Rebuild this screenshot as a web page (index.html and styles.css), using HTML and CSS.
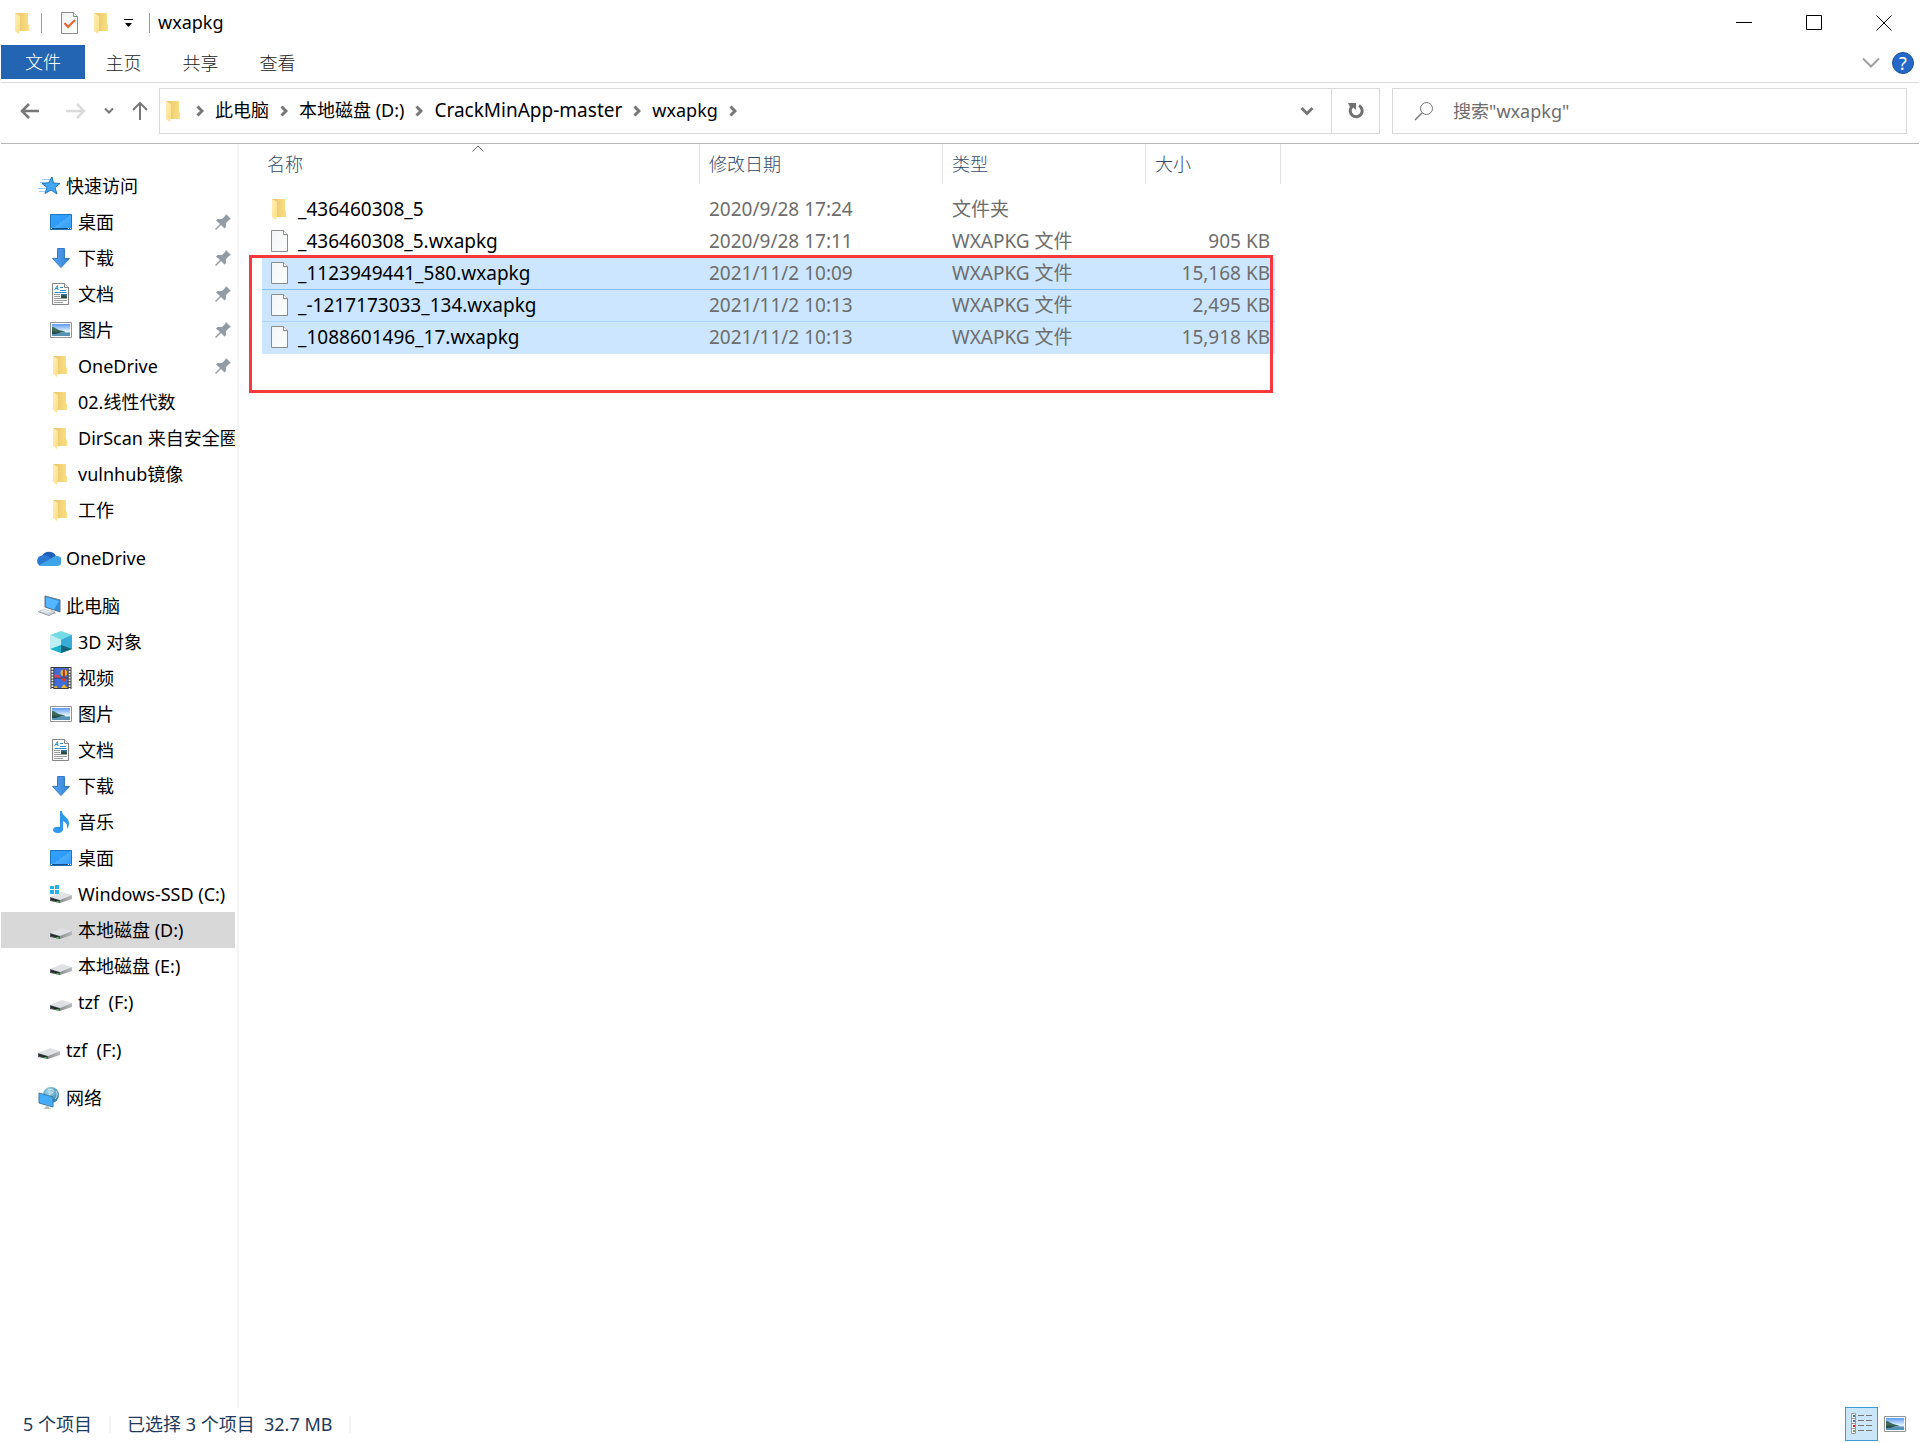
FILE: index.html
```html
<!DOCTYPE html>
<html lang="zh-CN">
<head>
<meta charset="utf-8">
<title>wxapkg</title>
<link rel="stylesheet" href="styles.css">
</head>
<body>
<svg class="sprite" aria-hidden="true">
  <defs>
    <linearGradient id="g-folder" x1="0" x2="1"><stop offset="0" stop-color="#e8c467"/><stop offset="1" stop-color="#fbdf86"/></linearGradient>
    <linearGradient id="g-flap" x1="0" x2="1" y1="0" y2="1"><stop offset="0" stop-color="#ffeeb5"/><stop offset="1" stop-color="#ffdf86"/></linearGradient>
    <linearGradient id="g-desk" x1="0" x2="1" y1="0" y2="1"><stop offset="0" stop-color="#35a3ff"/><stop offset=".5" stop-color="#2e9bfb"/><stop offset=".5" stop-color="#4aacff"/><stop offset="1" stop-color="#2f9dff"/></linearGradient>
    <linearGradient id="g-arrow" x1="0" x2="1"><stop offset="0" stop-color="#5aa5ee"/><stop offset="1" stop-color="#2f7fd8"/></linearGradient>
    <linearGradient id="g-sky" x1="0" x2="0" y1="0" y2="1"><stop offset="0" stop-color="#5d9af0"/><stop offset=".6" stop-color="#e3f3ff"/><stop offset="1" stop-color="#b8dcf0"/></linearGradient>
    <linearGradient id="g-drive" x1="0" x2="1"><stop offset="0" stop-color="#8a8c8e"/><stop offset="1" stop-color="#b9bbbd"/></linearGradient>
    <linearGradient id="g-paper" x1="0" x2="1" y1="0" y2="1"><stop offset="0" stop-color="#f1f4f5"/><stop offset="1" stop-color="#fdfdfd"/></linearGradient>
    <radialGradient id="g-globe" cx=".4" cy=".3" r=".8"><stop offset="0" stop-color="#b8e0f2"/><stop offset=".5" stop-color="#5aa5c9"/><stop offset="1" stop-color="#27698f"/></radialGradient>
  </defs>
  <symbol id="i-folder" viewBox="0 -1 22 22"><path d="M3 0h13v11l1 1v6H6z" fill="url(#g-folder)"/><path d="M3 0l5 3v13l-1 5-4-3z" fill="url(#g-flap)"/></symbol>
  <symbol id="i-file" viewBox="0 0 22 22"><path d="M2.500.5h12l4 4v17h-16z" fill="url(#g-paper)" stroke="#8b8b8b"/><path d="M14.500.5v4h4" fill="#fff" stroke="#8b8b8b"/></symbol>
  <symbol id="i-check" viewBox="0 0 22 22"><use href="#i-file"/><path d="M5.500 11l3.500 4 7-7" fill="none" stroke="#f0602a" stroke-width="2"/></symbol>
  <symbol id="i-desktop" viewBox="0 0 22 22"><path d="M.5 3.500h21v15H.5z" fill="url(#g-desk)" stroke="#1d74bf"/><path d="M1 17h20v1H1z" fill="#174d80"/><path d="M1 17h1v1H1zM18 17h1v1h-1zM20 17h1v1h-1z" fill="#fff"/></symbol>
  <symbol id="i-download" viewBox="0 0 22 22"><path d="M7.500 1.500h7v10h5L11 20.500 2.500 11.500h5z" fill="url(#g-arrow)" stroke="#3779c4"/></symbol>
  <symbol id="i-picture" viewBox="0 0 22 22"><path d="M.5 3.500h21v15H.5z" fill="#fff" stroke="#949494"/><path d="M2 5h18v12H2z" fill="url(#g-sky)"/><path d="M2 8c3 0 4 2 7 3s5 1 7 2.500H2z" fill="#3c6b5d"/><path d="M2 13.500h18V17H2z" fill="#5590b5"/><path d="M2 12.500h11l-7 2.500H2z" fill="#295046"/></symbol>
  <symbol id="i-document" viewBox="0 0 22 22"><path d="M2.500.5h12l4 4v17h-16z" fill="#fff" stroke="#858585"/><path d="M14.500.5v4h4" fill="#f5f5f5" stroke="#858585"/><path d="M4.500 7l3-4.500L8 7M6 5.500h2M10 4.500h3M10 7.500h6M4.500 9.500h12" fill="none" stroke="#2c8fd0"/><path d="M4 11.500h6M4 13.500h6M4 15.500h13M4 17.500h13M4 19.500h9" stroke="#9b9b9b"/><path d="M11 11h6v4h-6z" fill="#3b719f"/><path d="M11 13l3-1 3 2v1h-6z" fill="#2a5140"/></symbol>
  <symbol id="i-star" viewBox="0 0 24 22"><path d="M5 4.500h8M3 7.500h8M1 13.500h8M2 16.500h6" stroke="#9ccdf4"/><path d="M15 2l1.500 6 6.500.5-5 4 2 6.500-6-4-6 3.500 2-6L5 8.500l6.500-.5z" fill="#45a7f2" stroke="#2277bd"/></symbol>
  <symbol id="i-cloud" viewBox="0 0 24 22"><path d="M5 9a8 8 0 0 1 14 0l-7 6-9 1z" fill="#1c5fb4"/><path d="M5 8.500a5.500 5.500 0 0 0-2 10.300L14 12A8 8 0 0 0 5 8.500z" fill="#2b78d4"/><path d="M14 11.500a7 7 0 0 1 5.500-2.500 5 5 0 0 1 1 10H4c-.8 0-1.500-.3-2-.8z" fill="#3ea4ea"/></symbol>
  <symbol id="i-pc" viewBox="0 0 24 22"><path d="M8 1l15 4v12L8 12z" fill="#2d8ddd" stroke="#66747e"/><path d="M9 2l13 4-5 8.500-8-3z" fill="#55b7ff"/><path d="M14 15l4 1 1 3-6-2zM1 16l6-2 11 3-6 3z" fill="#c7cdd3"/><path d="M1 16l11 4 6-3v1l-6 3-11-4z" fill="#8b949c"/><path d="M4 16l8 2M6 15l8 2" stroke="#eef1f4"/></symbol>
  <symbol id="i-cube" viewBox="0 0 22 22"><path d="M11 0l11 4-11 5L0 4z" fill="#74dbe5"/><path d="M0 4l11 5v13L0 18z" fill="#bfeff2"/><path d="M22 4L11 9v13l11-4z" fill="#279fc8"/><path d="M11 9l11-5v14l-11-4z" fill="#38acd7"/><path d="M0 18l11-4 11 4-11 4z" fill="#1bb4cc"/><path d="M11 14l11 4-11 4z" fill="#156578"/></symbol>
  <symbol id="i-video" viewBox="0 0 22 23"><path d="M0 0h22v23H0z" fill="#3b3b3b"/><path d="M2 1v22M20 1v22" stroke="#eee" stroke-width="2" stroke-dasharray="2 1"/><path d="M4 1h14v10H4zM4 12h14v10H4z" fill="#3f6cd8"/><path d="M4 8h4l3 3H4z" fill="#d94757"/><circle cx="14" cy="6" r="3.500" fill="#e6b52a"/><path d="M13 2.500h2V11h-2z" fill="#b32a27"/><path d="M11 12h6l-3 4z" fill="#e23b25"/><path d="M11 22l3-4 4 4zM4 20h3v2H4z" fill="#f0b92c"/></symbol>
  <symbol id="i-music" viewBox="0 0 22 22"><path d="M10 0h2c0 5 7 6 7 12 0 3-1 5-2 6 1-5-2-7-4-8v8c0 3-3 4-5 4-3 0-5-1-5-3 0-3 4-4 7-3z" fill="#2f97ee"/></symbol>
  <symbol id="i-drive" viewBox="0 -1 22 22"><path d="M0 13l12-5 10 3-12 5z" fill="#dfe1e4"/><path d="M10 16l12-5v4l-12 4z" fill="url(#g-drive)"/><path d="M0 13l10 3v3L0 17z" fill="#55585a"/><path d="M1 14l8 2.500v1.500L1 16z" fill="#252829"/><path d="M6.500 17h2v1.500h-2z" fill="#35d04a"/></symbol>
  <symbol id="i-windrive" viewBox="0 0 22 22"><use href="#i-drive"/><path d="M0 3h4v3H0zM5 2h4v4H5zM0 7h4v4H0zM5 7h4v4H5z" fill="#28b1ef"/></symbol>
  <symbol id="i-network" viewBox="0 0 24 22"><circle cx="14" cy="8" r="8" fill="url(#g-globe)"/><path d="M11 3c3-2 6 0 5 2s-4 1-4 3M19 4c2 3 1 6-1 8" fill="none" stroke="#d4ecf4"/><path d="M2 6l14 4v10L2 16z" fill="#45aefa" stroke="#3b7bab"/><path d="M8 18l4 1v2l3 1H6l3-2z" fill="#b8bdc2"/></symbol>
  <symbol id="i-pin" viewBox="0 0 16 16"><path d="M11 0l5 5-2 1-3 3v4l-1.500 1.500L6 11l-5 5-1-1 5-5-4-3.500L2.500 5H7l3-3z" fill="#929ca5"/></symbol>
  <symbol id="i-crumb" viewBox="0 0 8 12"><path d="M1.500 1.500L6 6l-4.500 4.500" fill="none" stroke="#777" stroke-width="3"/></symbol>
  <symbol id="i-down" viewBox="0 0 14 10"><path d="M1.500 2L7 7.500 12.500 2" fill="none" stroke="#767676" stroke-width="3"/></symbol>
</svg>

<div class="window">
  <header class="titlebar">
    <svg class="icon"><use href="#i-folder"/></svg>
    <span class="bar-sep"></span>
    <button class="quick" aria-label="属性"><svg class="icon"><use href="#i-check"/></svg></button>
    <button class="quick" aria-label="新建文件夹"><svg class="icon"><use href="#i-folder"/></svg></button>
    <button class="quick quick-menu" aria-label="自定义快速访问工具栏"><svg width="10" height="10" viewBox="0 0 10 10"><path d="M0 1.500h9" stroke="#000"/><path d="M1 5h7L4.500 9z"/></svg></button>
    <span class="bar-sep"></span>
    <h1 class="title">wxapkg</h1>
    <div class="controls">
      <button class="control" aria-label="最小化"><svg width="16" height="16"><path d="M0 7.500h16" stroke="#000"/></svg></button>
      <button class="control" aria-label="最大化"><svg width="16" height="16"><path d="M.5.5h15v14H.5z" fill="none" stroke="#000"/></svg></button>
      <button class="control" aria-label="关闭"><svg width="16" height="16"><path d="M.5.5l15 15M15.500.5l-15 15" stroke="#000"/></svg></button>
    </div>
  </header>

  <nav class="ribbon">
    <button class="tab tab-file">文件</button>
    <button class="tab">主页</button>
    <button class="tab">共享</button>
    <button class="tab">查看</button>
    <div class="ribbon-end">
      <button class="plain" aria-label="展开功能区"><svg width="18" height="12"><path d="M1 1.500l8 8 8-8" fill="none" stroke="#a0a0a0" stroke-width="2"/></svg></button>
      <button class="help" aria-label="帮助">?</button>
    </div>
  </nav>

  <div class="toolbar">
    <div class="history">
      <button class="plain" aria-label="后退"><svg width="20" height="16"><path d="M19 8H2M9 1L2 8l7 7" fill="none" stroke="#777" stroke-width="2.500"/></svg></button>
      <button class="plain" aria-label="前进"><svg width="20" height="16"><path d="M0 8h18M11 1l7 7-7 7" fill="none" stroke="#dadada" stroke-width="2.500"/></svg></button>
      <button class="plain" aria-label="最近浏览的位置"><svg width="10" height="8"><path d="M1 1.500l4 4 4-4" fill="none" stroke="#777" stroke-width="2"/></svg></button>
      <button class="plain" aria-label="上移"><svg width="16" height="20"><path d="M8 19V2M1 9l7-7 7 7" fill="none" stroke="#777" stroke-width="2"/></svg></button>
    </div>
    <div class="address">
      <svg class="icon"><use href="#i-folder"/></svg>
      <svg class="crumb-arrow"><use href="#i-crumb"/></svg>
      <a class="crumb" href="#">此电脑</a>
      <svg class="crumb-arrow"><use href="#i-crumb"/></svg>
      <a class="crumb" href="#">本地磁盘 (D:)</a>
      <svg class="crumb-arrow"><use href="#i-crumb"/></svg>
      <a class="crumb latin" href="#">CrackMinApp-master</a>
      <svg class="crumb-arrow"><use href="#i-crumb"/></svg>
      <a class="crumb" href="#">wxapkg</a>
      <svg class="crumb-arrow"><use href="#i-crumb"/></svg>
      <button class="address-button address-drop" aria-label="以前的位置"><svg width="14" height="10"><use href="#i-down"/></svg></button>
      <button class="address-button refresh" aria-label="刷新"><svg width="18" height="18"><path d="M12 3.500a6 6 0 1 1-7 1" fill="none" stroke="#707070" stroke-width="3"/><path d="M1 1h8v7L6.500 5.500 4 7z" fill="#707070"/></svg></button>
    </div>
    <label class="search">
      <svg width="20" height="20"><circle cx="12.500" cy="7.500" r="6" fill="none" stroke="#777"/><path d="M8 12l-7 7" stroke="#777" stroke-width="1.500"/></svg>
      <input class="search-input" type="text" aria-label="搜索" placeholder='搜索"wxapkg"'>
    </label>
  </div>

  <div class="content">
    <nav class="sidebar">
      <ul class="tree">
        <li><a class="node root" href="#"><svg class="icon wide"><use href="#i-star"/></svg><span class="label">快速访问</span></a></li>
        <li><a class="node" href="#"><svg class="icon"><use href="#i-desktop"/></svg><span class="label">桌面</span><svg class="pin"><use href="#i-pin"/></svg></a></li>
        <li><a class="node" href="#"><svg class="icon"><use href="#i-download"/></svg><span class="label">下载</span><svg class="pin"><use href="#i-pin"/></svg></a></li>
        <li><a class="node" href="#"><svg class="icon"><use href="#i-document"/></svg><span class="label">文档</span><svg class="pin"><use href="#i-pin"/></svg></a></li>
        <li><a class="node" href="#"><svg class="icon"><use href="#i-picture"/></svg><span class="label">图片</span><svg class="pin"><use href="#i-pin"/></svg></a></li>
        <li><a class="node" href="#"><svg class="icon"><use href="#i-folder"/></svg><span class="label">OneDrive</span><svg class="pin"><use href="#i-pin"/></svg></a></li>
        <li><a class="node" href="#"><svg class="icon"><use href="#i-folder"/></svg><span class="label">02.线性代数</span></a></li>
        <li><a class="node" href="#"><svg class="icon"><use href="#i-folder"/></svg><span class="label">DirScan 来自安全圈</span></a></li>
        <li><a class="node" href="#"><svg class="icon"><use href="#i-folder"/></svg><span class="label">vulnhub镜像</span></a></li>
        <li><a class="node" href="#"><svg class="icon"><use href="#i-folder"/></svg><span class="label">工作</span></a></li>
      </ul>
      <ul class="tree">
        <li><a class="node root" href="#"><svg class="icon wide"><use href="#i-cloud"/></svg><span class="label">OneDrive</span></a></li>
      </ul>
      <ul class="tree">
        <li><a class="node root" href="#"><svg class="icon wide"><use href="#i-pc"/></svg><span class="label">此电脑</span></a></li>
        <li><a class="node" href="#"><svg class="icon"><use href="#i-cube"/></svg><span class="label">3D 对象</span></a></li>
        <li><a class="node" href="#"><svg class="icon"><use href="#i-video"/></svg><span class="label">视频</span></a></li>
        <li><a class="node" href="#"><svg class="icon"><use href="#i-picture"/></svg><span class="label">图片</span></a></li>
        <li><a class="node" href="#"><svg class="icon"><use href="#i-document"/></svg><span class="label">文档</span></a></li>
        <li><a class="node" href="#"><svg class="icon"><use href="#i-download"/></svg><span class="label">下载</span></a></li>
        <li><a class="node" href="#"><svg class="icon"><use href="#i-music"/></svg><span class="label">音乐</span></a></li>
        <li><a class="node" href="#"><svg class="icon"><use href="#i-desktop"/></svg><span class="label">桌面</span></a></li>
        <li><a class="node" href="#"><svg class="icon"><use href="#i-windrive"/></svg><span class="label">Windows-SSD (C:)</span></a></li>
        <li><a class="node current" href="#"><svg class="icon"><use href="#i-drive"/></svg><span class="label">本地磁盘 (D:)</span></a></li>
        <li><a class="node" href="#"><svg class="icon"><use href="#i-drive"/></svg><span class="label">本地磁盘 (E:)</span></a></li>
        <li><a class="node" href="#"><svg class="icon"><use href="#i-drive"/></svg><span class="label">tzf&nbsp; (F:)</span></a></li>
      </ul>
      <ul class="tree">
        <li><a class="node root" href="#"><svg class="icon wide"><use href="#i-drive"/></svg><span class="label">tzf&nbsp; (F:)</span></a></li>
      </ul>
      <ul class="tree">
        <li><a class="node root" href="#"><svg class="icon wide"><use href="#i-network"/></svg><span class="label">网络</span></a></li>
      </ul>
    </nav>

    <main class="files">
      <table class="file-table">
        <colgroup><col class="c-name"><col class="c-date"><col class="c-type"><col class="c-size"><col class="c-edge"></colgroup>
        <thead>
          <tr>
            <th><button class="column">名称<svg class="sort" width="12" height="7"><path d="M.5 6.500L6 1l5.500 5.500" fill="none" stroke="#666"/></svg></button></th>
            <th><button class="column">修改日期</button></th>
            <th><button class="column">类型</button></th>
            <th colspan="2"><button class="column">大小</button></th>
          </tr>
        </thead>
        <tbody>
          <tr><td><span class="file"><svg class="icon"><use href="#i-folder"/></svg>_436460308_5</span></td><td>2020/9/28 17:24</td><td>文件夹</td><td></td></tr>
          <tr><td><span class="file"><svg class="icon"><use href="#i-file"/></svg>_436460308_5.wxapkg</span></td><td>2020/9/28 17:11</td><td>WXAPKG 文件</td><td>905 KB</td></tr>
          <tr class="selected focused"><td><span class="file"><svg class="icon"><use href="#i-file"/></svg>_1123949441_580.wxapkg</span></td><td>2021/11/2 10:09</td><td>WXAPKG 文件</td><td>15,168 KB</td></tr>
          <tr class="selected"><td><span class="file"><svg class="icon"><use href="#i-file"/></svg>_-1217173033_134.wxapkg</span></td><td>2021/11/2 10:13</td><td>WXAPKG 文件</td><td>2,495 KB</td></tr>
          <tr class="selected"><td><span class="file"><svg class="icon"><use href="#i-file"/></svg>_1088601496_17.wxapkg</span></td><td>2021/11/2 10:13</td><td>WXAPKG 文件</td><td>15,918 KB</td></tr>
        </tbody>
      </table>
      <div class="highlight"></div>
    </main>
  </div>

  <footer class="status">
    <span class="status-item">5 个项目</span>
    <span class="status-item">已选择 3 个项目&nbsp; 32.7 MB</span>
    <div class="views">
      <button class="view active" aria-label="详细信息"><svg width="22" height="22"><path d="M.5.5h4v20h-4zM0 5.500h5M0 10.500h5M0 15.500h5" fill="#fff" stroke="#999"/><path d="M2 2h2v2H2z" fill="#36828a"/><path d="M2 7h2v2H2z" fill="#5575b5"/><path d="M2 12h2v2H2z" fill="#c22"/><path d="M2 17h2v2H2z" fill="#7d9b60"/><path d="M7 2.500h6M15 2.500h6M7 7.500h6M15 7.500h6M7 12.500h6M15 12.500h6M7 17.500h6M15 17.500h6" stroke="#777"/></svg></button>
      <button class="view" aria-label="大图标"><svg class="icon"><use href="#i-picture"/></svg></button>
    </div>
  </footer>
</div>
</body>
</html>
```
FILE: styles.css
```css
* { box-sizing: border-box; }

body {
  margin: 0;
  background: #fff;
  color: #000;
  font: 18px/24px "Noto Sans", "Noto Sans CJK SC", sans-serif;
}

button, input { font: inherit; color: inherit; border: 0; padding: 0; margin: 0; background: none; }
a { color: inherit; text-decoration: none; }
svg { display: block; flex: none; }
.sprite { position: absolute; width: 0; height: 0; }
.icon { width: 22px; height: 22px; }
.icon.wide { width: 24px; }

.window { display: flex; flex-direction: column; min-height: 100vh; padding: 0 1px; }

/* title bar */
.titlebar { display: flex; align-items: center; height: 45px; padding-left: 11px; }
.bar-sep { width: 1px; height: 20px; margin-left: 7px; background: #999; }
.quick { margin-left: 17px; }
.quick + .quick { margin-left: 10px; }
.quick + .quick-menu { margin: 0 8px 0 11px; }
.title { margin: 0 0 0 8px; padding-bottom: 2px; font-size: 18px; font-weight: 400; }
.controls { display: flex; margin-left: auto; }
.control { display: flex; align-items: center; justify-content: center; width: 70px; height: 45px; }

/* ribbon */
.ribbon { display: flex; height: 38px; border-bottom: 1px solid #dadada; }
.tab { width: 77px; height: 36px; color: #222; font-weight: 300; }
.tab-file { width: 84px; height: 34px; background: #2465b3; color: #fff; }
.ribbon-end { display: flex; align-items: center; gap: 12px; margin-left: auto; padding: 0 5px 2px 0; }
.help { width: 22px; height: 22px; border: 1px solid #174f95; border-radius: 50%; background: #2469c9; color: #fff; line-height: 20px; }

/* address row */
.toolbar { display: flex; align-items: center; height: 61px; padding: 0 12px 4px 19px; border-bottom: 1px solid #b9b9b9; }
.history { display: flex; align-items: center; gap: 18px; width: 139px; flex: none; }
.history .plain:first-child { margin-right: 8px; }
.address { display: flex; align-items: center; flex: 712; min-width: 0; height: 46px; padding-left: 3px; border: 1px solid #d9d9d9; }
.crumb-arrow { width: 8px; height: 12px; margin: 0 11px; }
.crumb { padding-bottom: 2px; white-space: nowrap; }
.crumb.latin { font-size: 19px; }
.address-button { display: flex; align-items: center; justify-content: center; width: 48px; height: 44px; }
.address-drop { margin-left: auto; }
.refresh { border-left: 1px solid #d9d9d9; }
.search { display: flex; align-items: center; gap: 19px; flex: 288; min-width: 0; height: 46px; margin-left: 12px; padding-left: 21px; border: 1px solid #d9d9d9; }
.search-input { flex: 1; min-width: 0; outline: 0; }
.search-input::placeholder { color: #6d6d6d; opacity: 1; }

/* navigation pane */
.content { display: flex; flex: 1; }
.sidebar { width: 238px; flex: none; padding: 24px 2px 0 0; border-right: 2px solid #f5f5f5; }
.tree { margin: 0 0 12px; padding: 0; list-style: none; }
.node { display: flex; align-items: center; gap: 6px; height: 36px; padding-left: 49px; }
.node.root { gap: 5px; padding-left: 36px; }
.node.current { background: #d8d8d8; }
.label { flex: 1; overflow: hidden; white-space: nowrap; }
.pin { width: 16px; height: 16px; margin-right: 4px; }

/* file list */
.files { position: relative; flex: 1; min-width: 0; padding-left: 23px; }
.file-table { width: 1019px; table-layout: fixed; border-collapse: collapse; }
.c-name { width: 438px; }
.c-date { width: 243px; }
.c-type { width: 203px; }
.c-size { width: 129px; }
.c-edge { width: 6px; }
th { height: 50px; padding: 0; vertical-align: top; font-weight: 300; }
.column { position: relative; display: block; width: 100%; height: 40px; padding-left: 9px; border-right: 1px solid #e3e3e3; color: #34496a; text-align: left; }
th:first-child .column { padding-left: 5px; }
.sort { position: absolute; top: 1px; left: 50%; margin-left: -9px; }
td { height: 32px; padding: 0 5px 2px 9px; color: #6d6d6d; font-size: 19px; white-space: nowrap; }
td:first-child { padding-left: 7px; color: #000; }
td:nth-child(4) { text-align: right; }
.file { display: flex; align-items: center; gap: 7px; }
.selected td { background: #cce6ff; box-shadow: inset 0 -1px #a8d4fd; }
.focused td { box-shadow: inset 0 -1px #80c0fa; }
.selected:last-child td { box-shadow: none; }
.highlight { position: absolute; top: 111px; left: 10px; width: 1024px; height: 138px; border: 3px solid #f8383d; }

/* status bar */
.status { display: flex; align-items: center; height: 36px; padding: 0 13px 2px 22px; color: #1e395b; }
.status-item { display: flex; align-items: center; margin-right: 16px; }
.status-item::after { width: 2px; height: 17px; margin-left: 17px; background: #f2f2f2; content: ""; }
.views { display: flex; align-items: center; gap: 6px; margin-left: auto; }
.view { display: flex; align-items: center; justify-content: center; height: 34px; }
.view.active { width: 33px; border: 1px solid #3b9bd8; background: #cbe6f7; }
```
